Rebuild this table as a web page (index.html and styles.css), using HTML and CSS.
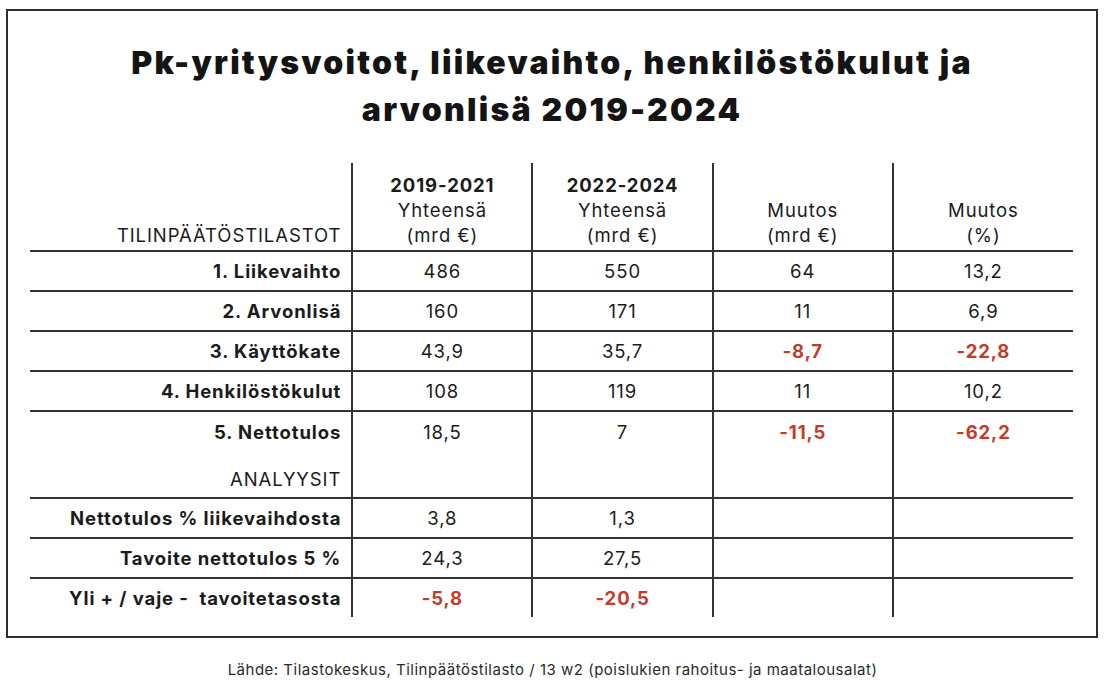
FILE: index.html
```html
<!DOCTYPE html>
<html lang="fi">
<head>
<meta charset="utf-8">
<title>Pk-yritysvoitot</title>
<link rel="stylesheet" href="styles.css">
</head>
<body>
<div class="frame">
  <h1 class="title">Pk-yritysvoitot, liikevaihto, henkilöstökulut ja<br>arvonlisä 2019-2024</h1>
  <table class="stats">
    <colgroup>
      <col class="c-label">
      <col class="c-val">
      <col class="c-val">
      <col class="c-val">
      <col class="c-val">
    </colgroup>
    <thead>
      <tr class="head">
        <th class="label plain">TILINPÄÄTÖSTILASTOT</th>
        <th><b>2019-2021</b><br>Yhteensä<br>(mrd €)</th>
        <th><b>2022-2024</b><br>Yhteensä<br>(mrd €)</th>
        <th>Muutos<br>(mrd €)</th>
        <th>Muutos<br>(%)</th>
      </tr>
    </thead>
    <tbody>
      <tr>
        <td class="label">1. Liikevaihto</td>
        <td>486</td><td>550</td><td>64</td><td>13,2</td>
      </tr>
      <tr>
        <td class="label">2. Arvonlisä</td>
        <td>160</td><td>171</td><td>11</td><td>6,9</td>
      </tr>
      <tr>
        <td class="label">3. Käyttökate</td>
        <td>43,9</td><td>35,7</td><td class="neg">-8,7</td><td class="neg">-22,8</td>
      </tr>
      <tr>
        <td class="label">4. Henkilöstökulut</td>
        <td>108</td><td>119</td><td>11</td><td>10,2</td>
      </tr>
      <tr class="noline">
        <td class="label">5. Nettotulos</td>
        <td>18,5</td><td>7</td><td class="neg">-11,5</td><td class="neg">-62,2</td>
      </tr>
      <tr class="section">
        <td class="label plain">ANALYYSIT</td>
        <td></td><td></td><td></td><td></td>
      </tr>
      <tr>
        <td class="label">Nettotulos % liikevaihdosta</td>
        <td>3,8</td><td>1,3</td><td></td><td></td>
      </tr>
      <tr>
        <td class="label">Tavoite nettotulos 5 %</td>
        <td>24,3</td><td>27,5</td><td></td><td></td>
      </tr>
      <tr class="last">
        <td class="label">Yli + / vaje -&nbsp; tavoitetasosta</td>
        <td class="neg">-5,8</td><td class="neg">-20,5</td><td></td><td></td>
      </tr>
    </tbody>
  </table>
</div>
<p class="source">Lähde: Tilastokeskus, Tilinpäätöstilasto / 13 w2 (poislukien rahoitus- ja maatalousalat)</p>
</body>
</html>
```

FILE: styles.css
```css
html, body {
  margin: 0;
  padding: 0;
  background: #ffffff;
}

body {
  font-family: Inter, "Liberation Sans", Arial, sans-serif;
  color: #1b1b1b;
}

.frame {
  box-sizing: border-box;
  margin: 9px 0 0 6px;
  width: 1092px;
  height: 629px;
  border: 2px solid #2e2e2e;
  padding: 28px 0 0 22px;
}

.title {
  margin: 0 0 30px -22px;
  font-size: 32px;
  line-height: 47px;
  font-weight: 900;
  text-align: center;
  color: #141414;
  letter-spacing: 2.25px;
}

.stats {
  border-collapse: collapse;
  table-layout: fixed;
  width: 1043px;
  font-size: 18.5px;
  letter-spacing: 0.9px;
}

.c-label { width: 322px; }
.c-val { width: 180px; }

.stats th,
.stats td {
  padding: 0;
  text-align: center;
  vertical-align: middle;
  height: 38px;
  border-bottom: 2px solid #333;
  border-left: 2px solid #333;
}

.stats th.label,
.stats td.label {
  border-left: none;
  text-align: right;
  padding-right: 10px;
  font-weight: 700;
}

.stats .plain {
  font-weight: 400 !important;
}

.head th {
  height: 85px;
  vertical-align: bottom;
  padding-bottom: 2px;
  font-weight: 400;
  line-height: 25px;
}

.head th b {
  font-weight: 700;
}

.noline td {
  border-bottom: none;
  height: 40px;
}

.section td {
  height: 38px;
  vertical-align: bottom;
  padding-bottom: 7px;
}

.last td {
  border-bottom: none;
  height: 38px;
}

.neg {
  color: #c63a27;
  font-weight: 700;
}

.source {
  margin: 22px 0 0;
  text-align: center;
  font-size: 15px;
  letter-spacing: 0.5px;
  color: #2a2a2a;
}
```
